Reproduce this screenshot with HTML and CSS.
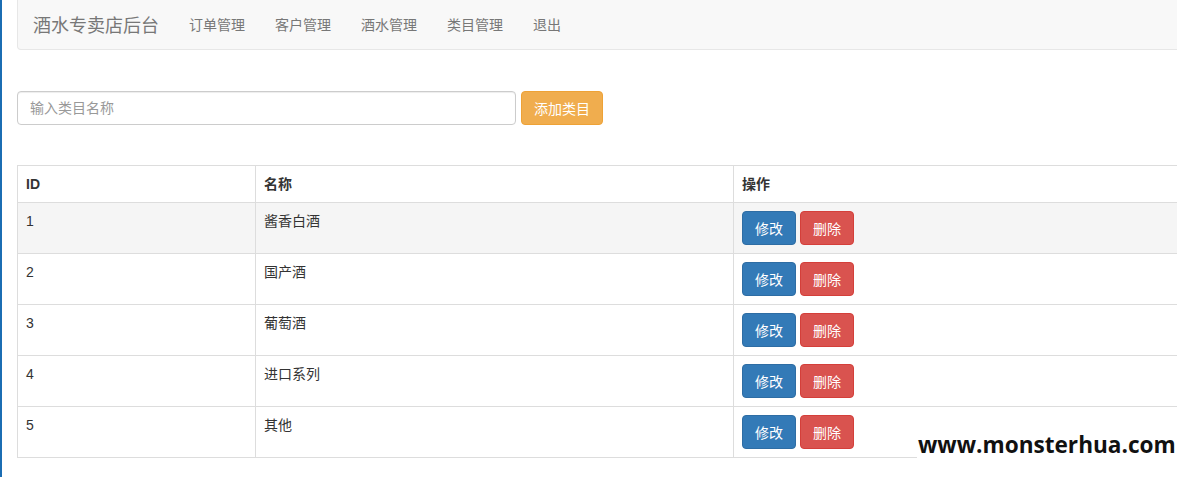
FILE: index.html
```html
<!DOCTYPE html>
<html lang="zh">

<head>
    <meta charset="UTF-8">
    <meta name="viewport" content="width=device-width, initial-scale=1.0">
    <title>类目管理</title>
    <link rel="stylesheet" href="styles.css">
</head>

<body>
    <div class="page">
        <nav class="navbar">
            <span class="brand">酒水专卖店后台</span>
            <ul class="nav">
                <li><a href="#">订单管理</a></li>
                <li><a href="#">客户管理</a></li>
                <li><a href="#">酒水管理</a></li>
                <li><a href="#">类目管理</a></li>
                <li><a href="#">退出</a></li>
            </ul>
        </nav>

        <form class="add-form">
            <input type="text" class="form-control" placeholder="输入类目名称">
            <button type="submit" class="btn btn-warning">添加类目</button>
        </form>

        <table class="table">
            <thead>
                <tr>
                    <th class="col-id">ID</th>
                    <th class="col-name">名称</th>
                    <th>操作</th>
                </tr>
            </thead>
            <tbody>
                <tr>
                    <td>1</td>
                    <td>酱香白酒</td>
                    <td><button class="btn btn-primary">修改</button><button class="btn btn-danger">删除</button></td>
                </tr>
                <tr>
                    <td>2</td>
                    <td>国产酒</td>
                    <td><button class="btn btn-primary">修改</button><button class="btn btn-danger">删除</button></td>
                </tr>
                <tr>
                    <td>3</td>
                    <td>葡萄酒</td>
                    <td><button class="btn btn-primary">修改</button><button class="btn btn-danger">删除</button></td>
                </tr>
                <tr>
                    <td>4</td>
                    <td>进口系列</td>
                    <td><button class="btn btn-primary">修改</button><button class="btn btn-danger">删除</button></td>
                </tr>
                <tr>
                    <td>5</td>
                    <td>其他</td>
                    <td><button class="btn btn-primary">修改</button><button class="btn btn-danger">删除</button></td>
                </tr>
            </tbody>
        </table>
    </div>

    <div class="watermark">www.monsterhua.com</div>
</body>

</html>
```

FILE: styles.css
```css
html,
body {
    margin: 0;
    overflow: hidden;
}

body {
    font-family: "Liberation Sans", "Noto Sans CJK SC", sans-serif;
    font-size: 14px;
    color: #333333;
    background-color: #ffffff;
    border-left: 2px solid #1b6db3;
    height: 477px;
}

.page {
    margin-left: 15px;
    width: 1220px;
}

.navbar {
    display: flex;
    align-items: center;
    height: 50px;
    background-color: #f8f8f8;
    border: 1px solid #e7e7e7;
    border-top: none;
    border-radius: 0 0 4px 4px;
    box-sizing: border-box;
}

.brand {
    font-size: 18px;
    color: #777777;
    padding: 0 15px;
    margin-top: -2px;
}

.nav {
    display: flex;
    list-style: none;
    margin: 0;
    padding: 0;
}

.nav a {
    display: block;
    padding: 0 15px;
    color: #777777;
    text-decoration: none;
    font-size: 14px;
    margin-top: -2px;
}

.add-form {
    display: flex;
    gap: 5px;
    margin-top: 41px;
}

.form-control {
    width: 499px;
    height: 34px;
    padding: 6px 12px;
    font-family: inherit;
    font-size: 14px;
    color: #555555;
    border: 1px solid #cccccc;
    border-radius: 4px;
    box-shadow: inset 0 1px 1px rgba(0, 0, 0, 0.075);
    box-sizing: border-box;
}

.form-control::placeholder {
    color: #999999;
}

.btn {
    height: 34px;
    padding: 6px 12px;
    font-family: inherit;
    font-size: 14px;
    color: #ffffff;
    border: 1px solid transparent;
    border-radius: 4px;
    box-sizing: border-box;
    cursor: pointer;
}

.btn-warning {
    width: 82px;
    background-color: #f0ad4e;
    border-color: #eea236;
}

.btn-primary {
    width: 54px;
    background-color: #337ab7;
    border-color: #2e6da4;
}

.btn-danger {
    width: 54px;
    margin-left: 4px;
    background-color: #d9534f;
    border-color: #d43f3a;
}

.table {
    width: 100%;
    margin-top: 40px;
    border-collapse: collapse;
    border: 1px solid #dddddd;
}

.table th,
.table td {
    border: 1px solid #dddddd;
    padding: 8px;
    text-align: left;
    vertical-align: top;
    line-height: 20px;
}

.table th {
    font-weight: bold;
}

.table td {
    height: 34px;
}

.col-id {
    width: 221px;
}

.col-name {
    width: 461px;
}

.table tbody tr:nth-child(odd) {
    background-color: #f5f5f5;
}

.table tbody tr:nth-child(n+2) {
    background-color: #ffffff;
}

.watermark {
    position: absolute;
    left: 917px;
    top: 418px;
    width: 260px;
    height: 59px;
    background-color: #ffffff;
    font-family: "Open Sans", sans-serif;
    font-weight: bold;
    font-size: 22.6px;
    color: #111111;
    padding-top: 11px;
    padding-left: 1px;
    box-sizing: border-box;
}
```
